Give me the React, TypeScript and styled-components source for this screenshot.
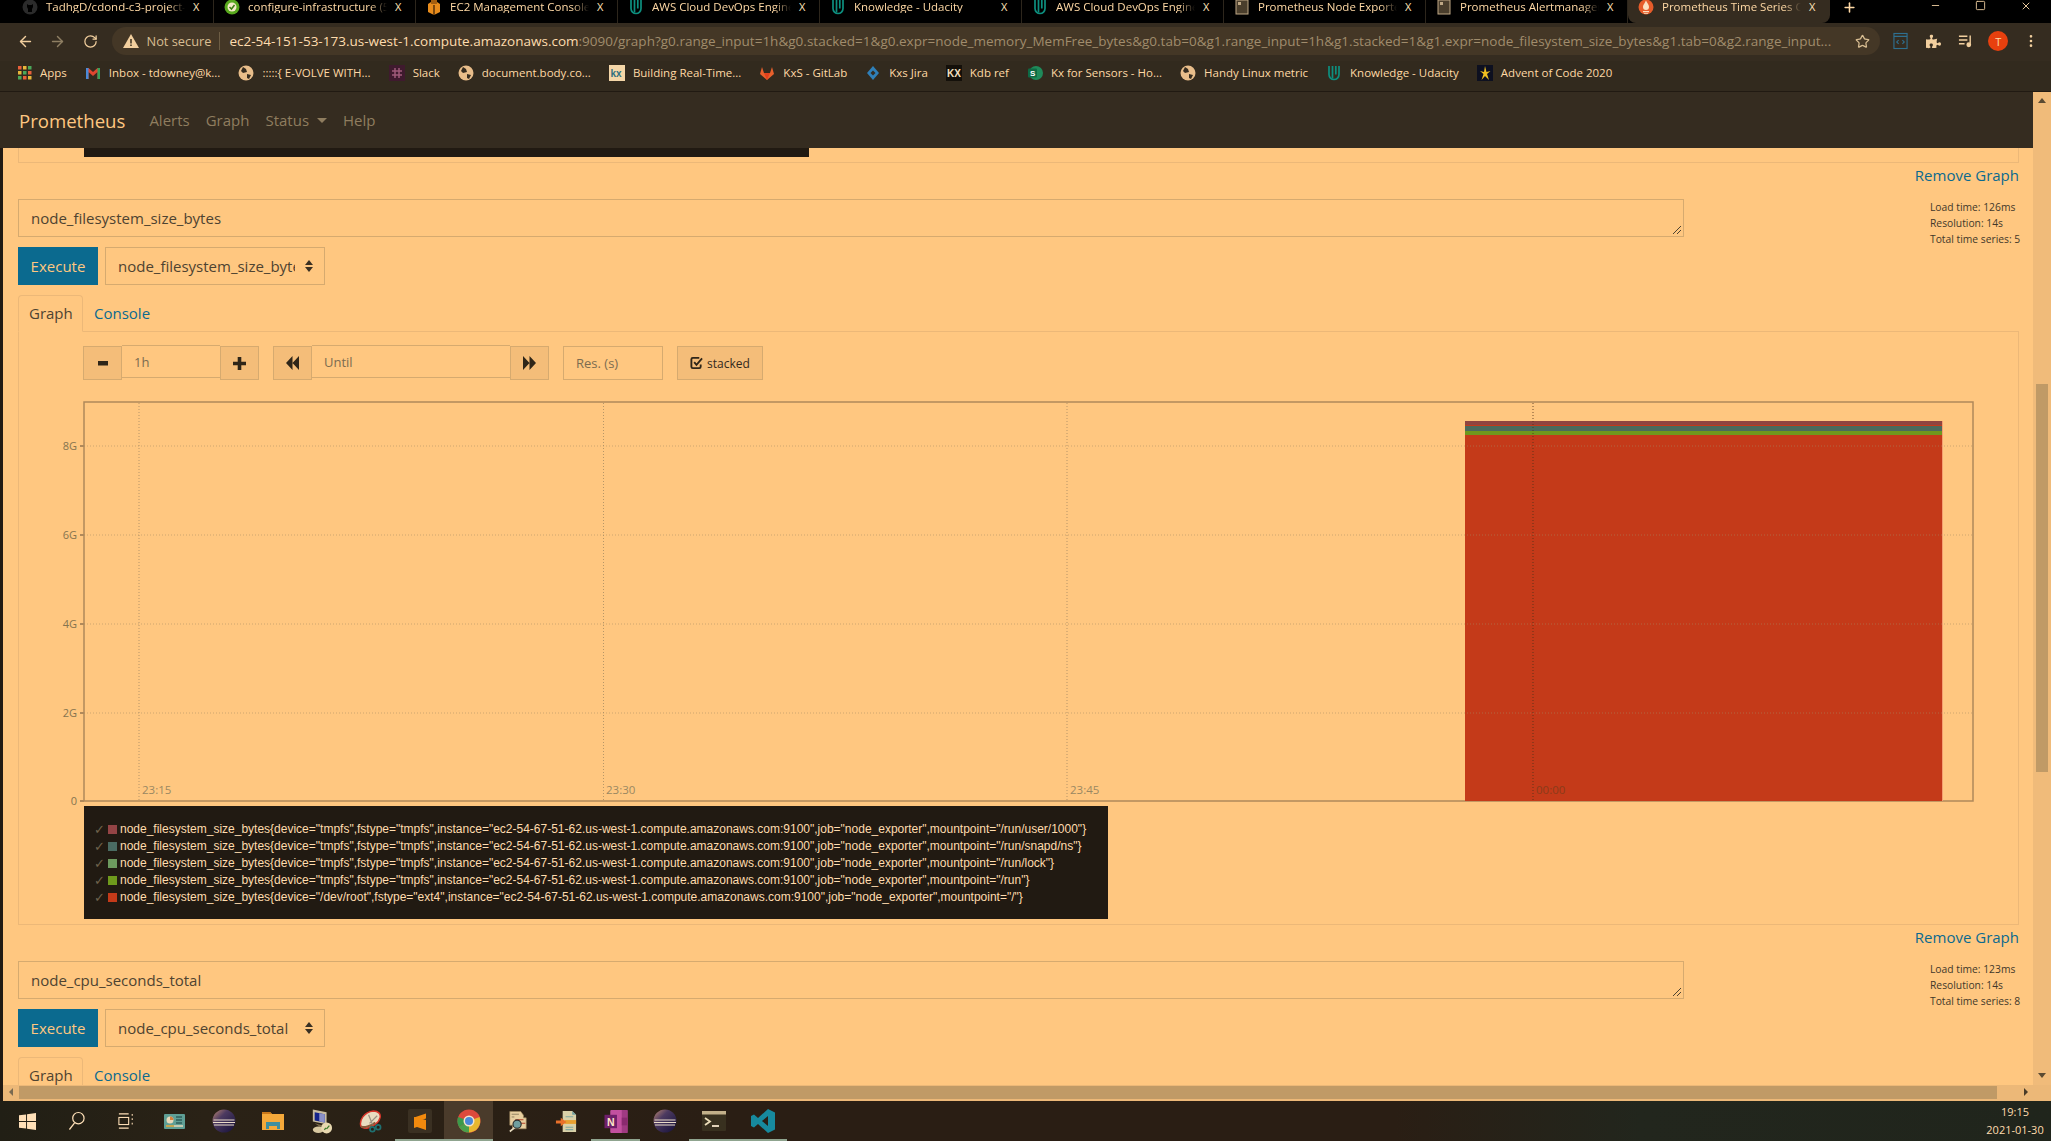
import React from "react";
import styled, { createGlobalStyle } from "styled-components";
import { ArrowLeft, ArrowRight, RotateCw, Star, MoreVertical, Plus, Minus, Square, X } from "lucide-react";
import { FaPuzzlePiece } from "react-icons/fa";

const Global = createGlobalStyle`
  html, body { margin: 0; padding: 0; height: 100%; overflow: hidden; background: #211a12; }
  * { box-sizing: border-box; }
  body { font-family: "Open Sans", "Noto Sans", sans-serif; }
`;

const Window = styled.div`display:flex;flex-direction:column;height:1141px;width:2051px;overflow:hidden;background:#211a12;`;

/* ---------- tab strip ---------- */
const TabStrip = styled.div`display:flex;height:23px;background:#000;padding-left:12px;flex:none;align-items:stretch;color:#ffd9a5;`;
const Tab = styled.div<{ $active?: boolean }>`
  width:202px;display:flex;align-items:flex-start;padding:0 10px 0 10px;gap:8px;font-size:11.5px;line-height:13px;
  border-right:1px solid ${p => (p.$active ? "transparent" : "#2d261c")};
  background:${p => (p.$active ? "#352c20" : "transparent")};
  border-radius:${p => (p.$active ? "0 0 8px 8px" : "0")};
`;
const TabIcon = styled.span`width:16px;height:15px;flex:none;margin-top:-1px;display:block;`;
const TabTitle = styled.span`flex:1;overflow:hidden;white-space:nowrap;-webkit-mask-image:linear-gradient(90deg,#000 88%,transparent);mask-image:linear-gradient(90deg,#000 88%,transparent);`;
const TabClose = styled.span`flex:none;font-size:11px;width:10px;color:#ffe2ba;`;
const NewTab = styled.span`margin-left:12px;width:20px;display:flex;align-items:flex-start;color:#ffd9a5;`;
const WindowControls = styled.div`margin-left:auto;display:flex;gap:34px;padding-right:19px;color:#e9c99c;align-items:flex-start;`;

/* ---------- toolbar ---------- */
const Toolbar = styled.div`height:38px;flex:none;background:#352c20;display:flex;align-items:center;padding:0 0 2px 9px;`;
const ToolBtn = styled.span<{ $dim?: boolean }>`width:32.500px;height:28px;display:flex;align-items:center;justify-content:center;flex:none;color:${p => (p.$dim ? "#8f7f63" : "#f2cf9e")};`;
const Omnibox = styled.div`margin:0 5px;width:1768px;height:28px;flex:none;background:#443726;border-radius:14px;display:flex;align-items:center;padding:0 10px 0 11px;white-space:nowrap;`;
const NotSecure = styled.span`color:#d8bd92;margin-left:8px;font-size:12.800px;`;
const OmniSep = styled.span`width:1px;height:18px;background:#6d5d44;margin:0 9px 0 8px;`;
const UrlBox = styled.span`flex:1;overflow:hidden;color:#a08c6c;font-size:13.500px;letter-spacing:.01px;`;
const UrlHost = styled.span`color:#ffdcae;`;
const Avatar = styled.span`width:20px;height:20px;border-radius:50%;background:#e8400e;color:#ffd9a5;font-size:11px;display:flex;align-items:center;justify-content:center;`;

/* ---------- bookmarks ---------- */
const Bookmarks = styled.div`height:31px;flex:none;background:#322a1e;border-bottom:1px solid #211a12;display:flex;align-items:center;padding:0 0 7px 16px;gap:18px;`;
const Bookmark = styled.span`display:flex;align-items:center;gap:8px;font-size:11.500px;color:#ffd9a5;white-space:nowrap;`;
const BookmarkIcon = styled.span`width:16px;height:16px;flex:none;display:block;`;

/* ---------- middle ---------- */
const Middle = styled.div`flex:1;min-height:0;display:flex;`;
const MainCol = styled.div`flex:1;min-width:0;display:flex;flex-direction:column;`;
const NavBar = styled.nav`height:56px;flex:none;background:#352c20;display:flex;align-items:center;padding-left:19px;`;
const Brand = styled.span`font-size:18.600px;color:#ffc780;margin-right:24px;`;
const NavLink = styled.span`font-size:15px;color:#8f7d5f;margin-right:16px;display:flex;align-items:center;`;
const Caret = styled.span`display:inline-block;margin-left:8px;border-top:5px solid #8f7d5f;border-left:5px solid transparent;border-right:5px solid transparent;`;
const Page = styled.main`flex:1;min-height:0;overflow:hidden;background:#ffc780;margin-left:3px;padding:0 14px 0 15px;`;

const TailPanel = styled.div`height:15px;border:1px solid #ecb878;border-top:none;`;
const TailLegend = styled.div`height:9px;width:725px;margin-left:65px;background:#211a12;`;

const RemoveRow = styled.div`height:26px;margin-bottom:10px;text-align:right;font-size:15px;line-height:24px;color:#0b6a8f;`;
const QueryRow = styled.div`display:flex;justify-content:space-between;`;
const QueryCol = styled.div`width:1666px;display:flex;flex-direction:column;gap:10px;`;
const ExprBox = styled.div`height:38px;border:1px solid #d6aa6f;padding:0 12px;font-size:15px;line-height:36px;color:#4e4331;position:relative;`;
const Grip = styled.svg`position:absolute;right:1px;bottom:1px;width:10px;height:10px;`;
const ExecRow = styled.div`display:flex;gap:7px;`;
const ExecBtn = styled.span`width:80px;height:38px;background:#0b6a8f;color:#ffc780;font-size:15px;display:flex;align-items:center;justify-content:center;`;
const MetricSelect = styled.div`width:220px;height:38px;border:1px solid #d6aa6f;font-size:15px;color:#4e4331;display:flex;align-items:center;padding:0 11px 0 12px;`;
const SelectText = styled.span`flex:1;overflow:hidden;white-space:nowrap;`;
const SelectArrows = styled.span`flex:none;width:9px;margin-left:9px;display:flex;flex-direction:column;gap:2px;align-items:center;`;
const ArrowUp = styled.i`border-bottom:5px solid #3a3022;border-left:4px solid transparent;border-right:4px solid transparent;`;
const ArrowDown = styled.i`border-top:5px solid #3a3022;border-left:4px solid transparent;border-right:4px solid transparent;`;
const Stats = styled.div`width:89px;font-size:10.300px;line-height:16px;color:#42382a;white-space:nowrap;`;

const TabBar = styled.div`display:flex;margin-top:10px;height:37px;border-bottom:1px solid #ecb878;`;
const PageTab = styled.span<{ $active?: boolean }>`
  height:37px;padding:0 0 2px 10px;font-size:15px;display:flex;align-items:center;
  color:${p => (p.$active ? "#4e4331" : "#0b6a8f")};
  ${p => p.$active ? "width:65px;border:1px solid #ecb878;border-bottom-color:#ffc780;border-radius:4px 4px 0 0;" : "margin-left:1px;"}
`;
const GraphPanel = styled.section`border:1px solid #ecb878;border-top:none;padding:14px 0 4px 41px;height:593px;`;
const Controls = styled.div`display:flex;margin-left:23px;height:34px;gap:14px;`;
const Group = styled.div`display:flex;`;
const GlyphBtn = styled.span`width:39px;height:34px;background:#f4bd79;border:1px solid #d6aa6f;display:flex;align-items:center;justify-content:center;`;
const RangeInput = styled.span<{ $w: number }>`
  width:${p => p.$w}px;height:33px;margin-top:-1px;border:1px solid #d6aa6f;border-left:none;border-right:none;
  padding:0 12px;font-size:13px;line-height:32px;color:#7c6c50;
`;
const ResInput = styled.span`width:100px;height:34px;border:1px solid #d6aa6f;padding:0 12px;font-size:13px;line-height:32px;color:#7c6c50;`;
const StackedBtn = styled.span`width:86px;height:34px;background:#f4bd79;border:1px solid #d6aa6f;color:#33291c;font-size:12px;display:flex;align-items:center;justify-content:center;gap:4px;`;
const ChartSvg = styled.svg`display:block;margin-top:18px;`;
const Legend = styled.div`width:1024px;height:113px;margin-left:24px;background:#211a12;padding:15px 0 0 10px;font-family:"Liberation Sans",Arial,sans-serif;font-size:12px;line-height:17px;color:#ffdcae;`;
const LegendLine = styled.div`display:flex;align-items:center;white-space:nowrap;height:17px;`;
const LegendCheck = styled.span`width:14px;flex:none;color:#6f634c;font-size:13px;`;
const Swatch = styled.i<{ $c: string }>`width:9px;height:9px;flex:none;margin-right:3px;background:${p => p.$c};`;

/* ---------- scrollbars ---------- */
const VScroll = styled.div`width:18px;flex:none;background:#f0bb7a;position:relative;`;
const ThumbV = styled.div`position:absolute;left:3px;right:3px;top:292px;height:388px;background:#c09a66;`;
const Tri = styled.i<{ $dir: "up" | "down" | "left" | "right" }>`
  position:absolute;width:0;height:0;
  ${p => p.$dir === "up" && "top:6px;left:5px;border-bottom:5px solid #5a4a32;border-left:4px solid transparent;border-right:4px solid transparent;"}
  ${p => p.$dir === "down" && "bottom:7px;left:5px;border-top:5px solid #5a4a32;border-left:4px solid transparent;border-right:4px solid transparent;"}
  ${p => p.$dir === "left" && "left:6px;top:3px;border-right:4px solid #7a6a50;border-top:4px solid transparent;border-bottom:4px solid transparent;"}
  ${p => p.$dir === "right" && "right:23px;top:3px;border-left:4px solid #4a3c28;border-top:4px solid transparent;border-bottom:4px solid transparent;"}
`;
const HScroll = styled.div`height:16px;flex:none;background:#ecb878;position:relative;margin-left:3px;`;
const ThumbH = styled.div`position:absolute;left:16px;width:1978px;top:1px;height:13px;background:#c09a66;`;

/* ---------- taskbar ---------- */
const Taskbar = styled.footer`height:40px;flex:none;display:flex;align-items:center;background:linear-gradient(90deg,#211f15 0%,#2a2216 10%,#2a1e14 35%,#2a1e14 68%,#22261d 80%,#20251c 100%);position:relative;padding-left:3px;`;
const TaskSlot = styled.span<{ $on?: boolean; $active?: boolean }>`
  width:49px;height:40px;flex:none;display:flex;align-items:center;justify-content:center;position:relative;
  background:${p => (p.$active ? "#4a3b2b" : "transparent")};
  ${p => p.$on && "box-shadow:inset 0 -2px 0 #8fa48f;"}
`;
const Clock = styled.div`margin-left:auto;width:66px;margin-right:3px;text-align:center;font-size:11px;line-height:18px;color:#ffdcae;`;

/* ---------- icons ---------- */
const Udacity = () => (
  <svg viewBox="0 0 16 16" width="16" height="16" fill="none" stroke="#0d8f7f" strokeWidth="1.700"><path d="M3 1v8.500a5 5 0 0 0 10 0V1" /><path d="M6.500 1v12.500M9.800 1v8.500" /></svg>
);
const Globe = () => (
  <svg viewBox="0 0 16 16" width="16" height="16"><circle cx="8" cy="8" r="7.500" fill="#e8bd8a"/><path d="M5 2l3 2 1 3-4 1-2-2zM9 9l4 1-2 4-2-1z" fill="#352c20"/></svg>
);
const DocIcon = () => (
  <svg viewBox="0 0 16 16" width="16" height="16"><rect x="2" y="1" width="12" height="14" fill="#4a3e2c" stroke="#bfa885"/><path d="M4 3h3v3H4z" fill="#bfa885"/></svg>
);
const TAB_ICONS: Record<string, React.ReactNode> = {
  gh: <svg viewBox="0 0 16 16" width="16" height="16"><circle cx="8" cy="8" r="7.500" fill="#2b2b2b"/><path d="M5 5l1.500 1h3L11 5v3l-1 2v3H6v-3L5 8z" fill="#000"/></svg>,
  ci: <svg viewBox="0 0 16 16" width="16" height="16"><circle cx="8" cy="8" r="7.500" fill="#58a81e"/><circle cx="8" cy="8" r="4.500" fill="#f4e9c9"/><path d="M5.500 8l2 2 3-4" stroke="#3b7d12" strokeWidth="1.500" fill="none"/></svg>,
  aws: <svg viewBox="0 0 16 16" width="16" height="16"><path d="M2 5l6-4 6 4v8l-6 3-6-3z" fill="#e88c1c"/><path d="M8 6v10" stroke="#5a3208" strokeWidth="1.500"/><path d="M5 1h6v4H5z" fill="#a55f10"/></svg>,
  u: <Udacity />,
  doc: <DocIcon />,
  pr: <svg viewBox="0 0 16 16" width="16" height="16"><circle cx="8" cy="8" r="7.500" fill="#e65c2a"/><path d="M8 1.500c1 3 3 3.500 3 6.500a3 3 0 0 1-6 0c0-2 1-2.500 3-6.500zM5 12h6v1.200H5zM6 14h4v.8H6z" fill="#fbe0c0"/></svg>,
};
const TABS = [
  ["gh", "TadhgD/cdond-c3-project-starter"],
  ["ci", "configure-infrastructure (5"],
  ["aws", "EC2 Management Console"],
  ["u", "AWS Cloud DevOps Engineer"],
  ["u", "Knowledge - Udacity"],
  ["u", "AWS Cloud DevOps Engineer"],
  ["doc", "Prometheus Node Exporter"],
  ["doc", "Prometheus Alertmanager"],
  ["pr", "Prometheus Time Series Collection"],
];

const AppsIcon = () => (
  <svg viewBox="0 0 16 16" width="16" height="16">
    {[2, 7, 12].map((x, i) => [1, 6, 11].map((y, j) => (
      <rect key={`${i}${j}`} x={x} y={y} width="3.500" height="3.500" fill={["#e8603a", "#e8b53a", "#4aa85a"][(i + j) % 3]} />
    )))}
  </svg>
);
const BOOKMARKS: [React.ReactNode, string][] = [
  [<AppsIcon />, "Apps"],
  [<svg viewBox="0 0 16 16" width="16" height="16"><path d="M1 3h2.500L8 7l4.500-4H15v11h-2.500V7L8 11 3.500 7v7H1z" fill="#e0452f"/><path d="M1 3h2.500v11H1z" fill="#4a8ad8"/><path d="M12.500 3H15v11h-2.500z" fill="#38a05a"/></svg>, "Inbox - tdowney@k..."],
  [<Globe />, ":::::{ E-VOLVE WITH..."],
  [<svg viewBox="0 0 16 16" width="16" height="16"><rect width="16" height="16" fill="#3f1a2e"/><path d="M6 3v10M10 3v10M3 6h10M3 10h10" stroke="#a05a7a" strokeWidth="1.500"/></svg>, "Slack"],
  [<Globe />, "document.body.co..."],
  [<svg viewBox="0 0 16 16" width="16" height="16"><rect width="16" height="16" fill="#f4d6a8"/><text x="1.500" y="12" fontSize="10" fontWeight="700" fill="#2f6f7f" fontFamily="Liberation Sans">kx</text></svg>, "Building Real-Time..."],
  [<svg viewBox="0 0 16 16" width="16" height="16"><path d="M8 15L1 9l2-7 2 6h6l2-6 2 7z" fill="#e8602c"/><path d="M8 15L5 8h6z" fill="#e2401c"/></svg>, "KxS - GitLab"],
  [<svg viewBox="0 0 16 16" width="16" height="16"><path d="M8 1l6 7-6 7-6-7z" fill="#2f7fb8"/><path d="M8 5.500L10.500 8 8 10.500 5.500 8z" fill="#352c20"/></svg>, "Kxs Jira"],
  [<svg viewBox="0 0 16 16" width="16" height="16"><rect width="16" height="16" fill="#14100a"/><text x="1" y="12" fontSize="10" fontWeight="700" fill="#f4e0c0" fontFamily="Liberation Sans">KX</text></svg>, "Kdb ref"],
  [<svg viewBox="0 0 16 16" width="16" height="16"><circle cx="9" cy="8" r="7" fill="#1f8a5a"/><rect x="1" y="3.500" width="9" height="9" rx="1" fill="#0e6a44"/><text x="3" y="11" fontSize="8" fontWeight="700" fill="#fff" fontFamily="Liberation Sans">S</text></svg>, "Kx for Sensors - Ho..."],
  [<Globe />, "Handy Linux metric"],
  [<Udacity />, "Knowledge - Udacity"],
  [<svg viewBox="0 0 16 16" width="16" height="16"><rect width="16" height="16" fill="#0d1020"/><path d="M8 1l1.500 6 4-1-3.500 3 2 6L8 11l-3.500 4 2-6L3 6l4 1z" fill="#f0c020"/></svg>, "Advent of Code 2020"],
];

const Eclipse = () => (
  <svg viewBox="0 0 24 24" width="24" height="24">
    <defs>
      <linearGradient id="ecl" x1="0" y1="0" x2="1" y2="1">
        <stop offset="0" stopColor="#c08a72" />
        <stop offset=".35" stopColor="#4c3a60" />
        <stop offset="1" stopColor="#141038" />
      </linearGradient>
    </defs>
    <circle cx="12" cy="12" r="11.500" fill="url(#ecl)" />
    <path d="M1.500 11h21M1 13.500h22M2 16h20" stroke="#eadcc8" strokeWidth="1" />
  </svg>
);
const TASK_ICONS: { on?: boolean; active?: boolean; icon: React.ReactNode }[] = [
  { icon: <svg viewBox="0 0 18 18" width="17" height="17"><path d="M0 2.500L7.500 1.500V8.500H0zM8.500 1.300L18 0V8.500H8.500zM0 9.500H7.500V16.500L0 15.500zM8.500 9.500H18V18L8.500 16.700z" fill="#ffe0b8"/></svg> },
  { icon: <svg viewBox="0 0 18 20" width="17" height="20" fill="none" stroke="#ffe0b8" strokeWidth="1.300"><circle cx="11" cy="7" r="6"/><path d="M7 12L1.500 19"/></svg> },
  { icon: <svg viewBox="0 0 18 20" width="16" height="20" fill="none" stroke="#ffe0b8" strokeWidth="1.200"><path d="M1 2h11M1 18h11"/><rect x="1" y="6" width="11" height="8"/><path d="M16 2v2M16 7v2M16 12v2"/></svg> },
  { icon: <svg viewBox="0 0 21 15" width="21" height="15"><rect width="21" height="15" rx="1" fill="#5f9f95"/><circle cx="6" cy="6" r="3.500" fill="#e8d8b8"/><path d="M6 6V2.500A3.500 3.500 0 0 1 9.500 6z" fill="#d8803a"/><path d="M12 3h6M12 6h6M12 9h6" stroke="#163f3f" strokeWidth="1.200"/><path d="M2 12h8" stroke="#e8a838" strokeWidth="1.500"/><path d="M10 12h9" stroke="#e8d8b8" strokeWidth="1.500"/></svg> },
  { icon: <Eclipse /> },
  { icon: <svg viewBox="0 0 22 18" width="22" height="18"><path d="M0 0h8l2 2h12v16H0z" fill="#f5a93a"/><path d="M0 0h8l2 2H0z" fill="#c9781a"/><path d="M4 17v-7h14v7h-3v-3H7v3z" fill="#3f8f9f"/></svg> },
  { icon: <svg viewBox="0 0 24 26" width="22" height="25"><path d="M2 0l15 3v13L2 13z" fill="#c8bca0"/><path d="M4 3l11 2v9L4 12z" fill="#14238a"/><path d="M9 4l6 1v9l-6-1z" fill="#8a90c8"/><path d="M4 15l8 2-2 2z" fill="#7a6a4a"/><ellipse cx="8" cy="22" rx="6" ry="3.500" fill="#d8c8a0"/><circle cx="17" cy="20" r="6" fill="#e8d8b0"/><path d="M14.500 22l2-2M17 21l3-3.500" stroke="#3a7a2a" strokeWidth="1.400"/></svg> },
  { icon: <svg viewBox="0 0 24 24" width="23" height="23"><path d="M2 17C0 11 5 2 15 1c5 0 8 3 7 7-1 5-8 10-14 11-3 0-5 0-6-2z" fill="#e8dcc0" stroke="#d8352a" strokeWidth="1.500"/><path d="M2 17c3 2 10 0 15-4" stroke="#8a5a3a" strokeWidth="2" fill="none"/><path d="M10 5l4 10M19 6l-8 8" stroke="#9a9080" strokeWidth="1.300"/><circle cx="14" cy="20" r="2.500" fill="none" stroke="#1f6f6f" strokeWidth="1.800"/><circle cx="20" cy="18" r="2.500" fill="none" stroke="#1f6f6f" strokeWidth="1.800"/></svg> },
  { on: true, icon: <svg viewBox="0 0 24 24" width="24" height="24"><rect width="24" height="24" rx="2" fill="#3a3022"/><path d="M18 4L6 8v6l12 3v-6L6 8M6 14v3l12 4v-4" fill="#f28a0e"/><path d="M18 4.500L6 8.500v5l12-4zM18 11L6 15v4l12-4z" fill="#f28a0e"/></svg> },
  { on: true, active: true, icon: <svg viewBox="0 0 24 24" width="24" height="24"><circle cx="12" cy="12" r="11.500" fill="#dc4a3c"/><path d="M12 12L2 18A11.500 11.500 0 0 0 12 23.500z" fill="#4aa04a"/><path d="M12 12l-10 6A11.500 11.500 0 0 1 1.200 8z" fill="#3a9a4a"/><path d="M12 12l10.500-4A11.500 11.500 0 0 1 12 23.500z" fill="#e8b830"/><circle cx="12" cy="12" r="5.500" fill="#f4e4ca"/><circle cx="12" cy="12" r="4" fill="#4a88d8"/></svg> },
  { icon: <svg viewBox="0 0 22 24" width="20" height="23"><path d="M2 1h12l3 4v3h3v12H5v-4H2z" fill="#e8cfa0" stroke="#a08a60" strokeWidth=".7"/><path d="M8 10h9M14 14h5" stroke="#b0442a" strokeWidth="1.200"/><path d="M4 4h8M4 7h3" stroke="#8a7a5a"/><circle cx="10" cy="15" r="4.500" fill="#6f9f9f" stroke="#2a2a2a" strokeWidth="1.200"/><path d="M7 19l-5 4" stroke="#e8dcc0" strokeWidth="1.800"/></svg> },
  { icon: <svg viewBox="0 0 24 24" width="23" height="23"><path d="M8 1h10l4 4v18H8z" fill="#d9d0a8"/><path d="M18 1v4h4z" fill="#6f9f9f"/><path d="M11 7h8M11 18h8M11 20.500h8" stroke="#7fa8a0" strokeWidth="1.200"/><path d="M10 10.500h12v4H10z" fill="#e8a030"/><path d="M1 11h5V8l6 4.500L6 17v-3H1z" fill="#e8702a"/></svg> },
  { on: true, icon: <svg viewBox="0 0 24 24" width="24" height="23"><rect x="6" y="0" width="18" height="24" rx="1" fill="#c2509f"/><path d="M18 0h6v24h-6z" fill="#a03a82"/><path d="M18 8h6v8h-6z" fill="#8a2a6f"/><rect x="0" y="5" width="13" height="14" fill="#6f1f6a"/><text x="2.500" y="16.500" fontSize="11" fontWeight="700" fill="#ffe9c8" fontFamily="Liberation Sans">N</text></svg> },
  { icon: <Eclipse /> },
  { on: true, icon: <svg viewBox="0 0 24 20" width="24" height="20"><rect width="24" height="20" rx="1" fill="#38301f"/><rect width="24" height="3.500" fill="#c2b08a"/><path d="M3 7l5 3.500L3 14" stroke="#eadcb8" strokeWidth="1.800" fill="none"/><path d="M10 15h7" stroke="#f4e4ca" strokeWidth="1.800"/></svg> },
  { on: true, icon: <svg viewBox="0 0 24 24" width="24" height="24"><path d="M17 0l7 3.500v17L17 24 7 15l-4 3.500L0 17V7l3-1.500L7 9zM17 7l-6 5 6 5z" fill="#178a9e"/></svg> },
];

const Grid = "#a58a62";
const ChartDrawing = () => (
  <ChartSvg width="1916" height="408">
    <path d="M24 4H1913V403H24z" fill="none" stroke="#b0895a" strokeWidth="1.500" />
    <rect x="1405" y="23" width="477" height="380" fill="#c43a19" />
    <rect x="1405" y="23" width="477" height="4" fill="#8f4540" />
    <rect x="1405" y="28" width="477" height="5" fill="#4a6a5c" />
    <rect x="1405" y="33" width="477" height="4" fill="#6f981d" />
    <rect x="1882" y="23" width="1" height="380" fill="#f59e70" />
    {[48, 137, 226, 315].map(y => (
      <path key={y} d={`M24 ${y}H1912`} stroke={Grid} strokeDasharray="1 2" opacity=".55" />
    ))}
    {[79, 543.5, 1007].map(x => (
      <path key={x} d={`M${x} 5V402`} stroke={Grid} strokeDasharray="1 2" opacity=".8" />
    ))}
    <path d="M1473 5V402" stroke="#4a3018" strokeDasharray="1 2" opacity=".8" />
    {[[48, "8G"], [137, "6G"], [226, "4G"], [315, "2G"], [403, "0"]].map(([y, t]) => (
      <g key={t as string}>
        <path d={`M20 ${y}H24`} stroke="#b0895a" strokeWidth="2" />
        <text x="17" y={(y as number) + 4} textAnchor="end" fontSize="11" fill="#85744f" fontFamily="Open Sans">{t}</text>
      </g>
    ))}
    {[[82, "23:15"], [546, "23:30"], [1010, "23:45"], [1476, "00:00"]].map(([x, t]) => (
      <text key={t as string} x={x as number} y="396" fontSize="11.500" fill={t === "00:00" ? "#8a3a1a" : "#9a8762"} fontFamily="Open Sans">{t}</text>
    ))}
  </ChartSvg>
);

const GlyphMinus = () => <svg viewBox="0 0 12 12" width="12" height="12"><rect x="1" y="4" width="10" height="4.500" fill="#2f2619" /></svg>;
const GlyphPlus = () => <svg viewBox="0 0 13 13" width="13" height="13"><path d="M4.700 0h3.600v4.700H13v3.600H8.300V13H4.700V8.300H0V4.700h4.700z" fill="#2f2619" /></svg>;
const GlyphBack = () => <svg viewBox="0 0 13 14" width="13" height="14"><path d="M6.500 0v14L0 7zM13 0v14L6.500 7z" fill="#2f2619" /></svg>;
const GlyphFwd = () => <svg viewBox="0 0 13 14" width="13" height="14"><path d="M0 0v14l6.500-7zM6.500 0v14L13 7z" fill="#2f2619" /></svg>;
const GlyphCheck = () => (
  <svg viewBox="0 0 14 15" width="13" height="14" fill="none" stroke="#2f2619" strokeWidth="2"><path d="M10 2H3a1.500 1.500 0 0 0-1.500 1.500v8A1.500 1.500 0 0 0 3 13h7a1.500 1.500 0 0 0 1.500-1.500V9" /><path d="M4.500 6.500l2.500 3L13 2.500" /></svg>
);

const INST = 'instance="ec2-54-67-51-62.us-west-1.compute.amazonaws.com:9100",job="node_exporter"';
const SERIES: [string, string][] = [
  ["#944445", `node_filesystem_size_bytes{device="tmpfs",fstype="tmpfs",${INST},mountpoint="/run/user/1000"}`],
  ["#4a6b62", `node_filesystem_size_bytes{device="tmpfs",fstype="tmpfs",${INST},mountpoint="/run/snapd/ns"}`],
  ["#6d9a5e", `node_filesystem_size_bytes{device="tmpfs",fstype="tmpfs",${INST},mountpoint="/run/lock"}`],
  ["#6f9a1c", `node_filesystem_size_bytes{device="tmpfs",fstype="tmpfs",${INST},mountpoint="/run"}`],
  ["#c43a19", `node_filesystem_size_bytes{device="/dev/root",fstype="ext4",${INST},mountpoint="/"}`],
];

const GripIcon = () => (
  <Grip viewBox="0 0 10 10"><path d="M9 1L1 9M9 5L5 9" stroke="#4e4331" strokeWidth="1" fill="none" /></Grip>
);

const GraphBlock: React.FC<{ expr: string; selectLabel: string; load: string; total: string; children?: React.ReactNode }> = ({ expr, selectLabel, load, total, children }) => (
  <>
    <RemoveRow>Remove Graph</RemoveRow>
    <QueryRow>
      <QueryCol>
        <ExprBox>{expr}<GripIcon /></ExprBox>
        <ExecRow>
          <ExecBtn>Execute</ExecBtn>
          <MetricSelect>
            <SelectText>{selectLabel}</SelectText>
            <SelectArrows><ArrowUp /><ArrowDown /></SelectArrows>
          </MetricSelect>
        </ExecRow>
      </QueryCol>
      <Stats>
        <div>Load time: {load}</div>
        <div>Resolution: 14s</div>
        <div>Total time series: {total}</div>
      </Stats>
    </QueryRow>
    <TabBar>
      <PageTab $active>Graph</PageTab>
      <PageTab>Console</PageTab>
    </TabBar>
    {children}
  </>
);

export default function App() {
  return (
    <Window>
      <Global />
      <TabStrip>
        {TABS.map(([ic, t], i) => (
          <Tab key={i} $active={i === 8}>
            <TabIcon>{TAB_ICONS[ic]}</TabIcon>
            <TabTitle>{t}</TabTitle>
            <TabClose>X</TabClose>
          </Tab>
        ))}
        <NewTab><Plus size={15} strokeWidth={2.5} /></NewTab>
        <WindowControls>
          <Minus size={11} />
          <Square size={11} />
          <X size={12} />
        </WindowControls>
      </TabStrip>

      <Toolbar>
        <ToolBtn><ArrowLeft size={17} /></ToolBtn>
        <ToolBtn $dim><ArrowRight size={17} /></ToolBtn>
        <ToolBtn><RotateCw size={15} /></ToolBtn>
        <Omnibox>
          <svg viewBox="0 0 16 14" width="16" height="14"><path d="M8 0l8 14H0z" fill="#f2cf9e" /><path d="M8 5v4.500M8 10.500v1.500" stroke="#443726" strokeWidth="1.600" /></svg>
          <NotSecure>Not secure</NotSecure>
          <OmniSep />
          <UrlBox><UrlHost>ec2-54-151-53-173.us-west-1.compute.amazonaws.com</UrlHost>:9090/graph?g0.range_input=1h&amp;g0.stacked=1&amp;g0.expr=node_memory_MemFree_bytes&amp;g0.tab=0&amp;g1.range_input=1h&amp;g1.stacked=1&amp;g1.expr=node_filesystem_size_bytes&amp;g1.tab=0&amp;g2.range_input...</UrlBox>
          <Star size={15} color="#d8bd92" style={{ marginLeft: 12 }} />
        </Omnibox>
        <ToolBtn>
          <svg viewBox="0 0 16 18" width="15" height="18" fill="none" stroke="#2f6f8f" strokeWidth="1.200"><rect x="1" y="1" width="14" height="16" /><path d="M1 4h14M6 8l-2 2 2 2M10 8l2 2-2 2" /></svg>
        </ToolBtn>
        <ToolBtn><FaPuzzlePiece size={15} color="#f2cf9e" /></ToolBtn>
        <ToolBtn>
          <svg viewBox="0 0 16 14" width="15" height="14" stroke="#f2cf9e" strokeWidth="1.500" fill="none"><path d="M1 2h9M1 6h9M1 10h6M13 1v9" /><circle cx="11.500" cy="11" r="1.800" fill="#f2cf9e" /></svg>
        </ToolBtn>
        <ToolBtn><Avatar>T</Avatar></ToolBtn>
        <ToolBtn><MoreVertical size={16} /></ToolBtn>
      </Toolbar>

      <Bookmarks>
        {BOOKMARKS.map(([ic, t]) => (
          <Bookmark key={t}><BookmarkIcon>{ic}</BookmarkIcon>{t}</Bookmark>
        ))}
      </Bookmarks>

      <Middle>
        <MainCol>
          <NavBar>
            <Brand>Prometheus</Brand>
            <NavLink>Alerts</NavLink>
            <NavLink>Graph</NavLink>
            <NavLink>Status<Caret /></NavLink>
            <NavLink>Help</NavLink>
          </NavBar>
          <Page>
            <TailPanel><TailLegend /></TailPanel>
            <GraphBlock expr="node_filesystem_size_bytes" selectLabel="node_filesystem_size_bytes" load="126ms" total="5">
              <GraphPanel>
                <Controls>
                  <Group>
                    <GlyphBtn><GlyphMinus /></GlyphBtn>
                    <RangeInput $w={98}>1h</RangeInput>
                    <GlyphBtn><GlyphPlus /></GlyphBtn>
                  </Group>
                  <Group>
                    <GlyphBtn><GlyphBack /></GlyphBtn>
                    <RangeInput $w={198}>Until</RangeInput>
                    <GlyphBtn><GlyphFwd /></GlyphBtn>
                  </Group>
                  <ResInput>Res. (s)</ResInput>
                  <StackedBtn><GlyphCheck />stacked</StackedBtn>
                </Controls>
                <ChartDrawing />
                <Legend>
                  {SERIES.map(([c, t]) => (
                    <LegendLine key={t}>
                      <LegendCheck>✓</LegendCheck>
                      <Swatch $c={c} />
                      {t}
                    </LegendLine>
                  ))}
                </Legend>
              </GraphPanel>
            </GraphBlock>
            <GraphBlock expr="node_cpu_seconds_total" selectLabel="node_cpu_seconds_total" load="123ms" total="8" />
          </Page>
        </MainCol>
        <VScroll>
          <Tri $dir="up" />
          <ThumbV />
          <Tri $dir="down" />
        </VScroll>
      </Middle>
      <HScroll>
        <Tri $dir="left" />
        <ThumbH />
        <Tri $dir="right" />
      </HScroll>

      <Taskbar>
        {TASK_ICONS.map((t, i) => (
          <TaskSlot key={i} $on={t.on} $active={t.active}>{t.icon}</TaskSlot>
        ))}
        <Clock>19:15<br />2021-01-30</Clock>
      </Taskbar>
    </Window>
  );
}
